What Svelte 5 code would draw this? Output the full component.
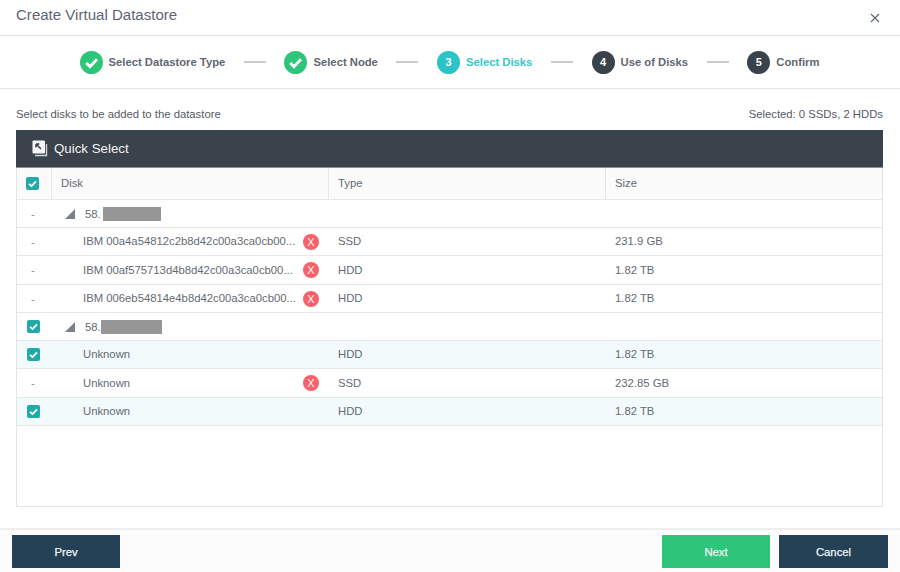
<script>
  const steps = [
    { label: "Select Datastore Type", state: "done" },
    { label: "Select Node", state: "done" },
    { label: "Select Disks", state: "active", num: 3 },
    { label: "Use of Disks", state: "todo", num: 4 },
    { label: "Confirm", state: "todo", num: 5 }
  ];

  const rows = [
    { kind: "group", ip: "58.", ipw: 18, box: 58, checked: false, h: 28 },
    { name: "IBM 00a4a54812c2b8d42c00a3ca0cb00...", err: true, type: "SSD", size: "231.9 GB", h: 28 },
    { name: "IBM 00af575713d4b8d42c00a3ca0cb00...", err: true, type: "HDD", size: "1.82 TB", h: 29 },
    { name: "IBM 006eb54814e4b8d42c00a3ca0cb00...", err: true, type: "HDD", size: "1.82 TB", h: 28 },
    { kind: "group", ip: "58.", ipw: 16, box: 61, checked: true, h: 28 },
    { name: "Unknown", checked: true, type: "HDD", size: "1.82 TB", h: 28 },
    { name: "Unknown", err: true, type: "SSD", size: "232.85 GB", h: 29 },
    { name: "Unknown", checked: true, type: "HDD", size: "1.82 TB", h: 28 }
  ];
</script>

{#snippet checkbox()}
  <svg class="cb" width="13" height="13" viewBox="0 0 13 13">
    <rect width="13" height="13" rx="2" fill="#20aaa8" />
    <path d="M3 6.8l2.5 2.3 4.5-4.8" fill="none" stroke="#fff" stroke-width="1.8" />
  </svg>
{/snippet}

<div class="dialog">
  <header class="title">
    <h1>Create Virtual Datastore</h1>
    <svg class="close" width="10" height="10" viewBox="0 0 10 10">
      <path d="M1 1l8 8M9 1l-8 8" stroke="#5b6472" stroke-width="1.1" fill="none" />
    </svg>
  </header>

  <div class="stepper">
    {#each steps as step, i}
      {#if i > 0}<span class="dash"></span>{/if}
      <div class="step {step.state}">
        {#if step.state === "done"}
          <svg width="23" height="23" viewBox="0 0 24 24">
            <circle cx="12" cy="12" r="12" fill="#2ec47a" />
            <path d="M6.5 12.5l3.9 3.8 7.3-7.6" fill="none" stroke="#fff" stroke-width="3" />
          </svg>
        {:else}
          <span class="num">{step.num}</span>
        {/if}
        <span class="label">{step.label}</span>
      </div>
    {/each}
  </div>

  <main class="content">
    <div class="info">
      <span>Select disks to be added to the datastore</span>
      <span>Selected: 0 SSDs, 2 HDDs</span>
    </div>

    <div class="quick">
      <svg width="16" height="17" viewBox="0 0 16 17">
        <path d="M3 15.5h11.5V4" fill="none" stroke="#cfd2d6" stroke-width="1.4" />
        <rect x="0.5" y="0.5" width="12.5" height="13" rx="1" fill="#f4f5f6" />
        <path d="M4 4l5 5M4 4h3.4M4 4v3.4" fill="none" stroke="#3a424c" stroke-width="1.5" />
      </svg>
      <span>Quick Select</span>
    </div>

    <div class="table">
      <div class="row head">
        <div class="check">{@render checkbox()}</div>
        <div class="cell">Disk</div>
        <div class="cell">Type</div>
        <div class="cell">Size</div>
      </div>
      {#each rows as row}
        <div class="row" class:picked={row.checked && row.kind !== "group"} style="height: {row.h}px">
          <div class="check">
            {#if row.checked}{@render checkbox()}{:else}<span class="dash-mark">-</span>{/if}
          </div>
          {#if row.kind === "group"}
            <div class="group">
              <svg width="10" height="10" viewBox="0 0 10 10"><path d="M10 0v10H0z" fill="#7b818a" /></svg>
              <span class="ip" style="width: {row.ipw}px">{row.ip}</span>
              <span class="redact" style="width: {row.box}px"></span>
            </div>
            <div></div>
            <div></div>
          {:else}
            <div class="disk">
              <span class="name">{row.name}</span>
              {#if row.err}
                <span class="err">X</span>
              {/if}
            </div>
            <div class="cell plain">{row.type}</div>
            <div class="cell plain">{row.size}</div>
          {/if}
        </div>
      {/each}
    </div>
  </main>

  <footer class="foot">
    <button class="navy">Prev</button>
    <div class="right">
      <button class="green">Next</button>
      <button class="navy wide">Cancel</button>
    </div>
  </footer>
</div>

<style>
  :global(body) {
    margin: 0;
    background: #fff;
    font-family: "Liberation Sans", Arial, sans-serif;
  }

  .dialog {
    width: 900px;
    height: 572px;
    display: flex;
    flex-direction: column;
    overflow: hidden;
    color: #646a72;
    font-size: 11.3px;
  }

  .title {
    height: 36px;
    box-sizing: border-box;
    border-bottom: 1px solid #e3e4e6;
    display: flex;
    align-items: center;
    justify-content: space-between;
    padding: 0 16px;
    flex: none;
  }

  .title h1 {
    margin: 0 0 6px;
    font-size: 15.05px;
    font-weight: 400;
    color: #5d6573;
  }

  .close {
    margin: 0 4px 0 0;
  }

  .stepper {
    height: 53px;
    box-sizing: border-box;
    border-bottom: 1px solid #e3e4e6;
    display: flex;
    align-items: center;
    justify-content: center;
    gap: 18.6px;
    padding-right: 1px;
    flex: none;
  }

  .step {
    display: flex;
    align-items: center;
    gap: 6px;
    font-size: 11.25px;
    font-weight: 700;
    color: #62676f;
  }

  .label {
    padding-bottom: 1px;
  }

  .step svg {
    display: block;
  }

  .step.active {
    color: #38c6c9;
  }

  .num {
    width: 23px;
    height: 23px;
    border-radius: 50%;
    background: #3a424c;
    color: #fff;
    font-size: 11px;
    display: flex;
    align-items: center;
    justify-content: center;
  }

  .active .num {
    background: #2cc3c6;
  }

  .dash {
    width: 22px;
    height: 2px;
    background: #c9cacc;
  }

  .content {
    flex: 1;
    padding: 0 17px 0 16px;
    display: flex;
    flex-direction: column;
    min-height: 0;
  }

  .info {
    height: 41px;
    display: flex;
    align-items: flex-end;
    justify-content: space-between;
    padding-bottom: 10px;
    box-sizing: border-box;
    color: #555b63;
    flex: none;
  }

  .quick {
    height: 38px;
    box-sizing: border-box;
    background: #3a424c;
    border-bottom: 1px solid #8c9095;
    color: #f2f3f4;
    display: flex;
    align-items: center;
    gap: 6px;
    padding: 0 0 1px 16px;
    font-size: 13.3px;
    flex: none;
  }

  .table {
    height: 339px;
    box-sizing: border-box;
    border: 1px solid #e3e4e6;
    border-top: 0;
    flex: none;
  }

  .row {
    display: grid;
    grid-template-columns: 35px 277px 277px 1fr;
    height: 28px;
    border-bottom: 1px solid #e6e7e9;
    box-sizing: border-box;
    align-items: center;
    background: #fff;
  }

  .row.head {
    height: 32px;
    background: #fbfbfb;
    align-items: stretch;
  }

  .head .check,
  .head .cell {
    border-right: 1px solid #e6e7e9;
  }

  .head .cell:last-child {
    border-right: 0;
  }

  .row.picked {
    background: #f3fafc;
  }

  .check {
    display: flex;
    align-items: center;
    justify-content: center;
    height: 100%;
  }

  .cb {
    display: block;
    margin-right: 3px;
  }

  .dash-mark {
    margin-right: 3px;
    color: #8a8f96;
  }

  .cell {
    padding: 0 0 1px 9px;
    display: flex;
    align-items: center;
  }

  .group {
    display: flex;
    align-items: center;
    padding-left: 13px;
    height: 100%;
  }

  .ip {
    margin-left: 10px;
  }

  .redact {
    height: 14px;
    background: #969696;
  }

  .disk {
    display: flex;
    align-items: center;
    justify-content: space-between;
    padding: 0 10px 0 31px;
  }

  .name {
    white-space: nowrap;
    padding-bottom: 1px;
  }

  .err {
    width: 16px;
    height: 16px;
    border-radius: 50%;
    background: #f9606a;
    color: #fff;
    font-size: 11px;
    display: flex;
    align-items: center;
    justify-content: center;
    flex: none;
  }

  .foot {
    height: 44px;
    box-sizing: border-box;
    border-top: 2px solid #eeeeee;
    background: #fcfcfc;
    display: flex;
    justify-content: space-between;
    padding: 5px 12px 0;
    flex: none;
  }

  .right {
    display: flex;
    gap: 9px;
  }

  button {
    width: 108px;
    height: 33px;
    border: 0;
    font: 400 11.3px "Liberation Sans", Arial, sans-serif;
    -webkit-text-stroke: 0.25px;
    color: #eef3f6;
    padding: 0;
  }

  .navy {
    background: #244156;
  }

  .wide {
    width: 109px;
  }

  .green {
    background: #2ec47a;
  }
</style>
